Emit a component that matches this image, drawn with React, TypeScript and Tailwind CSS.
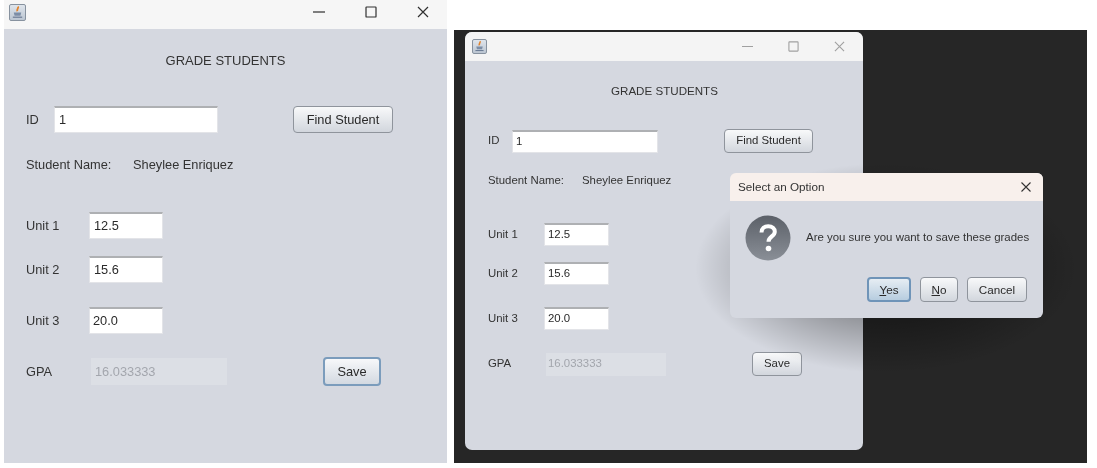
import type { ReactNode } from "react";

const FONT = "font-['Liberation_Sans',Arial,sans-serif]";

function JavaIcon({ className }: { className: string }) {
  return (
    <div className={`flex items-center justify-center rounded-[2px] border border-[#87929f] bg-gradient-to-b from-[#dfe5ec] to-[#bcc6d2] ${className}`}>
      <svg viewBox="0 0 16 16" className="h-full w-full">
        <path d="M8.5 1.5c1.2 1.9-1.8 2.8-.6 5.2" fill="none" stroke="#e2832c" strokeWidth="2" />
        <path d="M4 8h8l-.9 3.4H4.900z" fill="#7c8da6" />
        <path d="M3 13h10" stroke="#64758f" strokeWidth="1.2" />
      </svg>
    </div>
  );
}

function WindowControls({ faded, className }: { faded?: boolean; className: string }) {
  const stroke = faded ? "#a0a0a0" : "#303030";
  return (
    <>
      <svg viewBox="0 0 12 12" className={className}>
        <path d="M0 6h12" stroke={stroke} strokeWidth="1.2" />
      </svg>
      <svg viewBox="0 0 12 12" className={className}>
        <rect x="1" y="1" width="10" height="10" rx="0.6" fill="none" stroke={stroke} strokeWidth="1.2" />
      </svg>
      <svg viewBox="0 0 12 12" className={className}>
        <path d="M1 1l10 10M11 1L1 11" stroke={stroke} strokeWidth="1.2" />
      </svg>
    </>
  );
}

function Input({ value, className }: { value: string; className: string }) {
  return (
    <div className={`flex shrink-0 items-center border border-t-2 border-[#e3e4e8] border-t-[#aeb0b3] bg-white text-[#2a2a2a] ${className}`}>
      {value}
    </div>
  );
}

function DisabledInput({ value, className }: { value: string; className: string }) {
  return <div className={`flex shrink-0 items-center bg-[#dcdfe5] text-[#a3a6ad] ${className}`}>{value}</div>;
}

function Button({ children, focused, className }: { children: ReactNode; focused?: boolean; className: string }) {
  return (
    <div
      className={`flex shrink-0 items-center justify-center rounded-[4px] text-[#2a2a2a] ${
        focused
          ? "border-2 border-[#7b9cbc] bg-gradient-to-b from-[#f7f8fa] to-[#d3d9e1]"
          : "border border-[#8f949c] bg-gradient-to-b from-[#f8f9fa] to-[#d2d6dd]"
      } ${className}`}
    >
      {children}
    </div>
  );
}

function QuestionIcon() {
  return (
    <svg viewBox="0 0 46 46" className="h-[46px] w-[46px] shrink-0">
      <defs>
        <linearGradient id="q" x1="0" y1="0" x2="0" y2="1">
          <stop offset="0" stopColor="#5b6068" />
          <stop offset="1" stopColor="#8a8f97" />
        </linearGradient>
      </defs>
      <circle cx="23" cy="23" r="22.5" fill="url(#q)" />
      <path d="M16.500 17.500c0-4.200 3-6.300 6.700-6.300 4 0 6.600 2.300 6.600 5.500 0 4.600-6.300 4.900-6.300 10" fill="none" stroke="#fff" strokeWidth="4" />
      <circle cx="23.500" cy="33.500" r="2.800" fill="#fff" />
    </svg>
  );
}

function LeftWindow() {
  return (
    <div className="ml-1 flex h-[463px] w-[443px] shrink-0 flex-col bg-[#d5d8e0] text-[12.8px] text-[#333]">
      <div className="flex h-[29px] shrink-0 items-center bg-[#f6f6f6] pb-[5px] pl-[5px]">
        <JavaIcon className="h-[17px] w-[17px]" />
        <div className="ml-auto mr-[18px] flex gap-[40px]">
          <WindowControls className="h-3 w-3" />
        </div>
      </div>
      <div className="mt-[24px] h-4 text-center text-[13px] leading-4">GRADE STUDENTS</div>
      <div className="mt-[37px] flex h-[27px] items-center pl-[22px]">
        <span className="w-[28px]">ID</span>
        <Input value="1" className="h-[27px] w-[164px] pl-1" />
        <Button className="ml-[75px] h-[27px] w-[100px]">Find Student</Button>
      </div>
      <div className="mt-[24px] flex h-4 items-center pl-[22px] leading-4">
        <span className="w-[107px]">Student Name:</span>
        <span>Sheylee Enriquez</span>
      </div>
      <div className="mt-[39px] flex h-[27px] items-center pl-[22px]">
        <span className="w-[63px]">Unit 1</span>
        <Input value="12.5" className="h-[27px] w-[74px] pl-1" />
      </div>
      <div className="mt-[17px] flex h-[27px] items-center pl-[22px]">
        <span className="w-[63px]">Unit 2</span>
        <Input value="15.6" className="h-[27px] w-[74px] pl-1" />
      </div>
      <div className="mt-[24px] flex h-[27px] items-center pl-[22px]">
        <span className="w-[63px]">Unit 3</span>
        <Input value="20.0" className="h-[27px] w-[74px] pl-[3px]" />
      </div>
      <div className="mt-[23px] flex h-[29px] items-center pl-[22px]">
        <span className="w-[65px]">GPA</span>
        <DisabledInput value="16.033333" className="h-[27px] w-[136px] pl-1" />
        <Button focused className="ml-[96px] h-[29px] w-[58px]">
          Save
        </Button>
      </div>
    </div>
  );
}

function RightWindow() {
  return (
    <div className="ml-[11px] mt-[2px] flex h-[418px] w-[398px] shrink-0 flex-col overflow-hidden rounded-[7px] bg-[#d5d8e0] text-[11.4px] text-[#333]">
      <div className="flex h-[29px] shrink-0 items-center bg-[#f4f4f4] pl-[7px]">
        <JavaIcon className="h-[15px] w-[15px]" />
        <div className="ml-auto mr-[18px] flex gap-[35px]">
          <WindowControls faded className="h-[11px] w-[11px]" />
        </div>
      </div>
      <div className="mt-[22px] h-4 pl-[146px] text-[11.6px] leading-4">GRADE STUDENTS</div>
      <div className="mt-[30px] flex h-6 items-center pl-[23px]">
        <span className="w-[24px]">ID</span>
        <Input value="1" className="h-[23px] w-[146px] pl-[3px]" />
        <Button className="ml-[66px] h-6 w-[89px]">Find Student</Button>
      </div>
      <div className="mt-[19px] flex h-4 items-center pl-[23px] leading-4">
        <span className="w-[94px]">Student Name:</span>
        <span>Sheylee Enriquez</span>
      </div>
      <div className="mt-[35px] flex h-[23px] items-center pl-[23px]">
        <span className="w-[56px]">Unit 1</span>
        <Input value="12.5" className="h-[23px] w-[65px] pl-[3px]" />
      </div>
      <div className="mt-[16px] flex h-[23px] items-center pl-[23px]">
        <span className="w-[56px]">Unit 2</span>
        <Input value="15.6" className="h-[23px] w-[65px] pl-[3px]" />
      </div>
      <div className="mt-[22px] flex h-[23px] items-center pl-[23px]">
        <span className="w-[56px]">Unit 3</span>
        <Input value="20.0" className="h-[23px] w-[65px] pl-[3px]" />
      </div>
      <div className="mt-[22px] flex h-6 items-center pl-[23px]">
        <span className="w-[58px]">GPA</span>
        <DisabledInput value="16.033333" className="h-[23px] w-[120px] pl-[2px]" />
        <Button className="ml-[86px] h-6 w-[50px]">Save</Button>
      </div>
    </div>
  );
}

function Dialog() {
  return (
    <div className="absolute left-[276px] top-[143px] z-10 flex h-[145px] w-[313px] flex-col overflow-hidden rounded-[6px] bg-[#d5d8e0] text-[11.5px] text-[#333]">
      <div className="flex h-[28px] shrink-0 items-center justify-between bg-[#f8f0ec] pl-2 pr-3 text-[11.7px]">
        <span>Select an Option</span>
        <svg viewBox="0 0 10 10" className="h-[10px] w-[10px]">
          <path d="M0.5 0.5l9 9M9.5 0.5l-9 9" stroke="#333" strokeWidth="1.1" />
        </svg>
      </div>
      <div className="mt-[14px] flex items-center pl-[15px]">
        <QuestionIcon />
        <span className="ml-[15px] text-[11.45px]">Are you sure you want to save these grades</span>
      </div>
      <div className="mt-[16px] flex justify-end gap-[9px] pr-[16px] text-[11.7px]">
        <Button focused className="h-[25px] w-[44px] !border-[#6f94b8] !from-[#e6edf3] !to-[#b7cddf]">
          <span>
            <span className="underline">Y</span>es
          </span>
        </Button>
        <Button className="h-[25px] w-[38px]">
          <span>
            <span className="underline">N</span>o
          </span>
        </Button>
        <Button className="h-[25px] w-[60px]">Cancel</Button>
      </div>
    </div>
  );
}

export default function App() {
  return (
    <div className={`flex h-[468px] w-[1097px] items-start overflow-hidden bg-white blur-[0.4px] ${FONT}`}>
      <LeftWindow />
      <div className="relative ml-[7px] mt-[30px] h-[433px] w-[633px] shrink-0 overflow-hidden bg-[#262626]">
        <RightWindow />
        {/* soft shadow under the dialog */}
        <div className="absolute left-[241px] top-[133px] h-[210px] w-[383px] bg-[radial-gradient(closest-side,rgba(0,0,0,0.3)_50%,rgba(0,0,0,0)_100%)]" />
        <Dialog />
      </div>
    </div>
  );
}
